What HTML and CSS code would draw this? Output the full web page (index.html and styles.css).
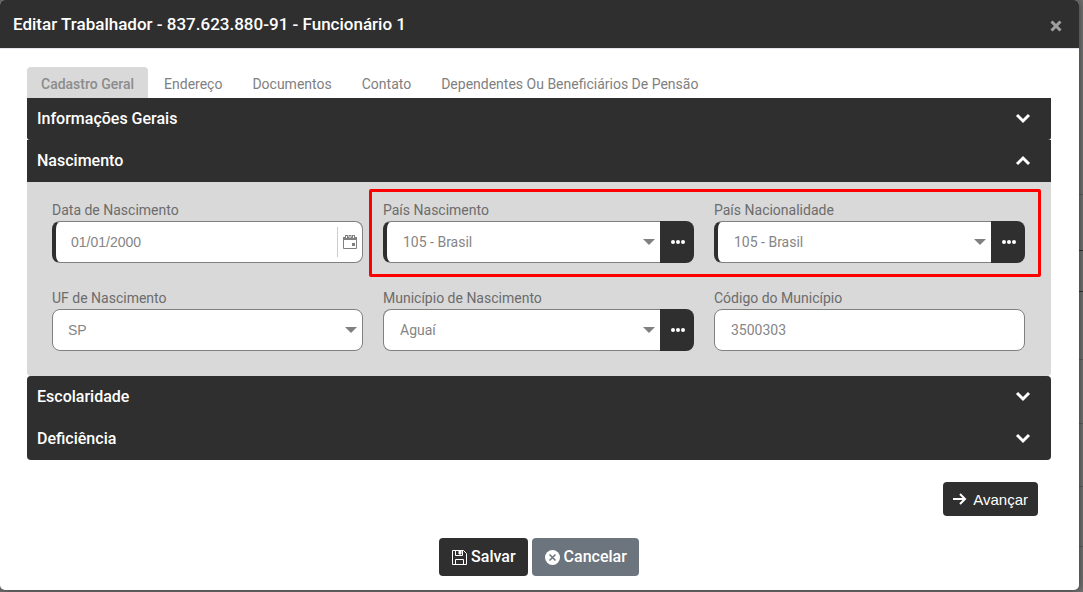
FILE: index.html
```
<!DOCTYPE html>
<html lang="pt-BR">
<head>
    <meta charset="UTF-8">
    <meta name="viewport" content="width=device-width, initial-scale=1.0">
    <title>Editar Trabalhador</title>
    <link rel="stylesheet" href="styles.css">
</head>
<body>
    <div class="modal" role="dialog" aria-labelledby="modalTitle">
        <header class="modal-header">
            <h1 class="modal-title" id="modalTitle">Editar Trabalhador - 837.623.880-91 - Funcionário 1</h1>
            <button class="close-btn" type="button" aria-label="Fechar">
                <svg width="12" height="12" viewBox="0 0 12 12"><path d="M1.500 1.500l9 9M10.500 1.500l-9 9"/></svg>
            </button>
        </header>

        <form class="modal-body">
            <nav class="tabs">
                <a class="tab active" href="#geral">Cadastro Geral</a>
                <a class="tab" href="#endereco">Endereço</a>
                <a class="tab" href="#documentos">Documentos</a>
                <a class="tab" href="#contato">Contato</a>
                <a class="tab" href="#dependentes">Dependentes Ou Beneficiários De Pensão</a>
            </nav>

            <div class="accordion">
                <button class="accordion-header first" type="button">
                    Informações Gerais
                    <svg class="chevron" width="16" height="12" viewBox="0 0 16 12"><path d="M2 3l6 6 6-6"/></svg>
                </button>
                <button class="accordion-header open" type="button">
                    Nascimento
                    <svg class="chevron" width="16" height="12" viewBox="0 0 16 12"><path d="M2 10l6-6 6 6"/></svg>
                </button>

                <div class="accordion-body">
                    <div class="field">
                        <label for="dataNascimento">Data de Nascimento</label>
                        <div class="control required">
                            <input class="arial" type="text" id="dataNascimento" value="01/01/2000">
                            <button class="calendar-btn" type="button" aria-label="Abrir calendário">
                                <svg width="14" height="14" viewBox="0 0 14 14">
                                    <path d="M.5 3h13v10.500H.5z" fill="none" stroke="#808080"/>
                                    <path d="M0 2h14v3H0z" fill="#808080"/>
                                    <path d="M2 0h3v3H2zM5.500 0h3v3h-3zM9 0h3v3H9z" fill="#808080"/>
                                    <path d="M3.500 1v2M7 1v2M10.500 1v2" stroke="#fff"/>
                                    <path d="M9 8h3v3H9z" fill="#808080"/>
                                </svg>
                            </button>
                        </div>
                    </div>

                    <div class="highlight">
                        <div class="field">
                            <label for="paisNascimento">País Nascimento</label>
                            <div class="group">
                                <div class="control required select">
                                    <select id="paisNascimento"><option>105 - Brasil</option></select>
                                </div>
                                <button class="more-btn" type="button" aria-label="Pesquisar país de nascimento">
                                    <svg width="14" height="4" viewBox="0 0 14 4"><circle cx="2" cy="2" r="2"/><circle cx="7" cy="2" r="2"/><circle cx="12" cy="2" r="2"/></svg>
                                </button>
                            </div>
                        </div>
                        <div class="field">
                            <label for="paisNacionalidade">País Nacionalidade</label>
                            <div class="group">
                                <div class="control required select">
                                    <select id="paisNacionalidade"><option>105 - Brasil</option></select>
                                </div>
                                <button class="more-btn" type="button" aria-label="Pesquisar país de nacionalidade">
                                    <svg width="14" height="4" viewBox="0 0 14 4"><circle cx="2" cy="2" r="2"/><circle cx="7" cy="2" r="2"/><circle cx="12" cy="2" r="2"/></svg>
                                </button>
                            </div>
                        </div>
                    </div>

                    <div class="field">
                        <label for="uf">UF de Nascimento</label>
                        <div class="control select">
                            <select class="arial" id="uf"><option>SP</option></select>
                        </div>
                    </div>
                    <div class="field">
                        <label for="municipio">Município de Nascimento</label>
                        <div class="group">
                            <div class="control select">
                                <select id="municipio"><option>Aguaí</option></select>
                            </div>
                            <button class="more-btn" type="button" aria-label="Pesquisar município">
                                <svg width="14" height="4" viewBox="0 0 14 4"><circle cx="2" cy="2" r="2"/><circle cx="7" cy="2" r="2"/><circle cx="12" cy="2" r="2"/></svg>
                            </button>
                        </div>
                    </div>
                    <div class="field">
                        <label for="codigo">Código do Município</label>
                        <div class="control">
                            <input type="text" id="codigo" value="3500303">
                        </div>
                    </div>
                </div>

                <button class="accordion-header closed-top" type="button">
                    Escolaridade
                    <svg class="chevron" width="16" height="12" viewBox="0 0 16 12"><path d="M2 3l6 6 6-6"/></svg>
                </button>
                <button class="accordion-header last" type="button">
                    Deficiência
                    <svg class="chevron" width="16" height="12" viewBox="0 0 16 12"><path d="M2 3l6 6 6-6"/></svg>
                </button>
            </div>

            <div class="next-row">
                <button class="btn next-btn" type="button">
                    <svg width="14" height="12" viewBox="0 0 14 12"><path d="M0 6h12M7 1l5 5-5 5" fill="none" stroke="#fff" stroke-width="2"/></svg>
                    Avançar
                </button>
            </div>

            <footer class="actions">
                <button class="btn save-btn" type="submit">
                    <svg width="15" height="15" viewBox="0 0 15 15" fill="none" stroke="#fff">
                        <path d="M.5.5h11l3 3v11H.5z"/>
                        <path d="M3.500.5v5h7v-5M3.500 14.500v-5h8v5"/>
                        <path d="M7 1h2v3H7z" fill="#fff"/>
                    </svg>
                    <span>Salvar</span>
                </button>
                <button class="btn cancel-btn" type="button">
                    <svg width="15" height="15" viewBox="0 0 15 15">
                        <circle cx="7.500" cy="7.500" r="7.500" fill="#fff"/>
                        <path d="M4.500 4.500l6 6M10.500 4.500l-6 6" stroke="#6c757d" stroke-width="1.500"/>
                    </svg>
                    <span>Cancelar</span>
                </button>
            </footer>
        </form>
    </div>
</body>
</html>
```
FILE: styles.css
```
* {
    box-sizing: border-box;
}

body {
    margin: 0;
    min-height: 100vh;
    font-family: Roboto, Arial, sans-serif;
    font-size: 14px;
    color: #666;
    /* dimmed page with its table lines */
    background:
        linear-gradient(#333, #333) 0 250px / 100% 1px no-repeat,
        linear-gradient(#333, #333) 0 291px / 100% 1px no-repeat,
        linear-gradient(#5c5c5c, #5c5c5c) 0 194px / 100% 1px no-repeat,
        linear-gradient(#5c5c5c, #5c5c5c) 0 359px / 100% 1px no-repeat,
        linear-gradient(#5c5c5c, #5c5c5c) 0 423px / 100% 1px no-repeat,
        linear-gradient(#5c5c5c, #5c5c5c) 0 486px / 100% 1px no-repeat,
        linear-gradient(#5c5c5c, #5c5c5c) 0 546px / 100% 1px no-repeat,
        #717171;
}

button,
input,
select {
    font: inherit;
    color: inherit;
}

button {
    border: none;
    cursor: pointer;
}

.modal {
    margin-right: 4px;
    background-color: #fff;
    border-radius: 5px;
    box-shadow: 0 0 8px rgba(0, 0, 0, 0.5);
}

.modal-header {
    display: flex;
    justify-content: space-between;
    align-items: center;
    height: 49px;
    padding: 0 17px 0 13px;
    background-color: #2f2f2f;
    border-bottom: 1px solid #e4e6ef;
    border-radius: 5px 5px 0 0;
}

.modal-title {
    margin: 0;
    font-size: 17px;
    font-weight: 500;
    color: #fff;
}

.close-btn {
    display: flex;
    margin-top: 4px;
    padding: 0;
    background: none;
}

.close-btn path {
    fill: none;
    stroke: #a0a0a0;
    stroke-width: 3;
}

.modal-body {
    padding: 18px 28px 14px 27px;
}

.tabs {
    display: flex;
}

.tab {
    padding: 3px 14px 0 16px;
    line-height: 28px;
    font-size: 14px;
    color: #808080;
    text-decoration: none;
}

.tab.active {
    padding: 3px 14px 0;
    font-weight: 500;
    color: #8c8c8c;
    background-color: #d9d9d9;
    border-radius: 4px 4px 0 0;
}

.accordion-header {
    display: flex;
    justify-content: space-between;
    align-items: center;
    width: 100%;
    height: 42px;
    padding: 0 20px 2px 10px;
    font-size: 16px;
    font-weight: 500;
    color: #fff;
    background-color: #2f2f2f;
}

.accordion-header.first {
    border-radius: 0 0 3px 3px;
}

.accordion-header.closed-top {
    border-radius: 4px 4px 0 0;
}

.accordion-header.last {
    border-radius: 0 0 4px 4px;
}

.chevron path {
    fill: none;
    stroke: #fff;
    stroke-width: 3;
}

.accordion-body {
    display: grid;
    grid-template-columns: repeat(3, 1fr);
    gap: 25px 20px;
    padding: 18px 26px 25px 25px;
    background-color: #d9d9d9;
    border-radius: 0 0 4px 4px;
}

.field label {
    display: block;
    line-height: 21px;
    color: #6c6c6c;
}

/* red frame around the two country fields */
.highlight {
    position: relative;
    grid-column: span 2;
    display: grid;
    grid-template-columns: 1fr 1fr;
    gap: 20px;
}

.highlight::after {
    content: "";
    position: absolute;
    inset: -11px -16px -14px -14px;
    border: 3px solid #f00;
    border-radius: 2px;
    pointer-events: none;
}

.group {
    display: flex;
}

.control {
    position: relative;
    display: flex;
    flex: 1;
    align-items: center;
    height: 42px;
    background-color: #fff;
    border: 1px solid #808080;
    border-radius: 8px;
}

.control.required {
    border-left: 4px solid #2f2f2f;
}

.group .control {
    border-right: none;
    border-radius: 8px 0 0 8px;
}

.control input,
.control select {
    flex: 1;
    min-width: 0;
    height: 100%;
    padding: 0 16px;
    color: #858585;
    background: transparent;
    border: none;
    outline: none;
    appearance: none;
}

.control .arial {
    padding-left: 15px;
    font-family: "Liberation Sans", Arial, sans-serif;
}

.select::after {
    content: "";
    position: absolute;
    right: 5px;
    border: 6px solid transparent;
    border-top-color: #808080;
    border-bottom: none;
    pointer-events: none;
}

.calendar-btn {
    display: flex;
    align-items: center;
    height: 30px;
    padding: 0 5px;
    background: none;
    border-left: 1px solid #ccc;
}

.more-btn {
    display: flex;
    justify-content: center;
    align-items: center;
    width: 34px;
    padding: 0 0 0 2px;
    background-color: #2f2f2f;
    border-radius: 0 8px 8px 0;
}

.more-btn svg {
    fill: #fff;
}

.next-row {
    display: flex;
    justify-content: flex-end;
    padding: 22px 13px;
}

.btn {
    display: flex;
    align-items: center;
    color: #fff;
    font-size: 16px;
    border-radius: 4px;
}

.next-btn {
    gap: 6px;
    height: 34px;
    padding: 0 10px;
    font-family: "Liberation Sans", Arial, sans-serif;
    font-size: 15px;
    background-color: #2f2f2f;
}

.actions {
    display: flex;
    justify-content: center;
    gap: 4px;
}

.save-btn,
.cancel-btn {
    gap: 4px;
    height: 38px;
    padding: 0 12px 0 13px;
    font-weight: 500;
    background-color: #2f2f2f;
}

.save-btn span,
.cancel-btn span {
    padding-bottom: 2px;
}

.cancel-btn {
    background-color: #6c757d;
}
```
